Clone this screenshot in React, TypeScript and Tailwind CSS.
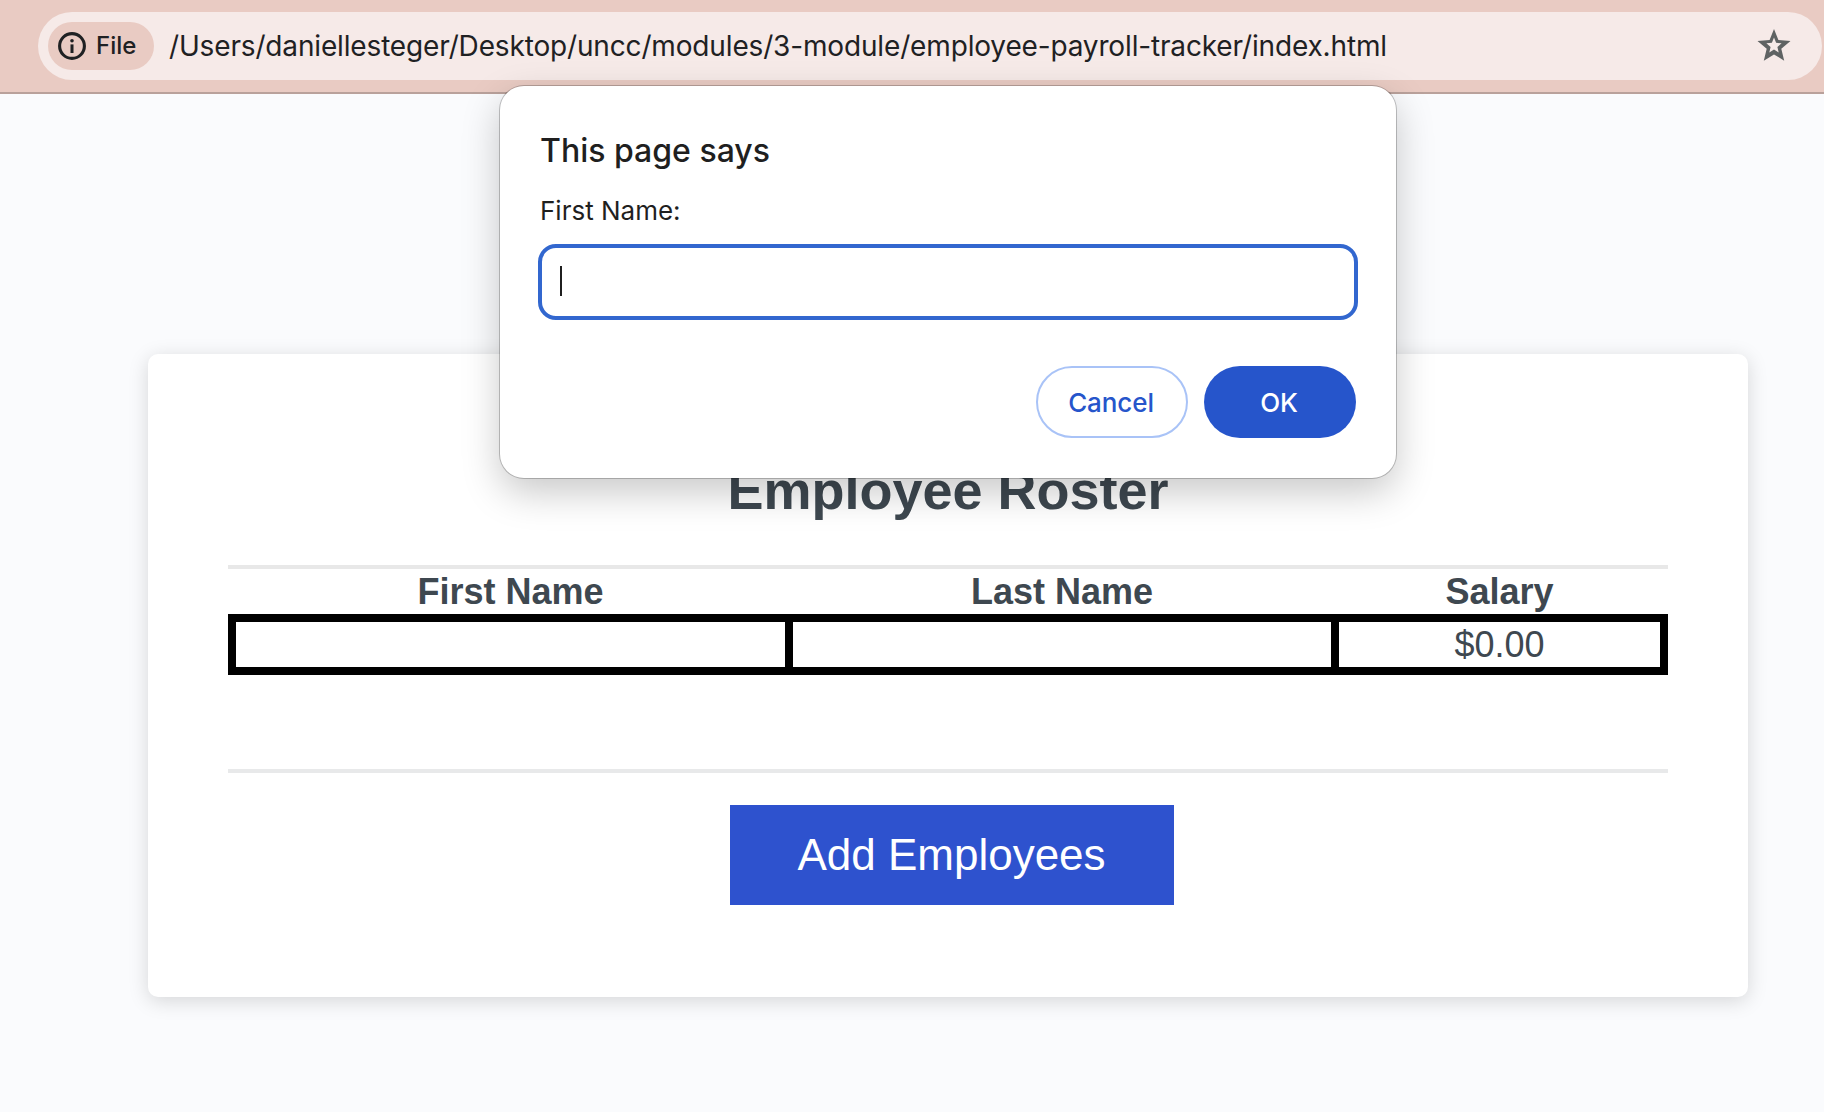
const columns = ["First Name", "Last Name", "Salary"];

function InfoIcon() {
  return (
    <svg className="h-7 w-7 shrink-0" viewBox="0 0 28 28" fill="none">
      <circle cx="14" cy="14" r="12.4" stroke="#1f2123" strokeWidth="3.1" />
      <rect x="12.5" y="12.4" width="3" height="8.6" fill="#1f2123" />
      <circle cx="14" cy="8.8" r="1.8" fill="#1f2123" />
    </svg>
  );
}

function StarIcon() {
  return (
    <svg className="h-8 w-[34px] shrink-0" viewBox="0 0 34 32" fill="#5f6363">
      <path
        fillRule="evenodd"
        d="M17 0L21.4 11L33.5 12L24.3 19.8L27.2 31.7L17 25.4L6.8 31.7L9.7 19.8L.5 12L12.6 11ZM17 8.4L14.9 13.8L9.4 14.3L13.6 17.9L12.3 23.5L17 20.6L21.7 23.5L20.4 17.9L24.6 14.3L19.1 13.8Z"
      />
    </svg>
  );
}

function AddressBar() {
  return (
    <header className="h-[94px] border-b-2 border-[#b9a19b] bg-[#e9cbc3] pt-3 pr-0.5 pl-[38px] text-[#1f2123]">
      <div className="flex h-[68px] items-center rounded-full bg-[#f6eae8] pr-[31px] pl-2.5">
        <div className="flex h-12 w-[106px] items-center gap-2.5 rounded-full bg-[#e9cbc3] pl-2.5">
          <InfoIcon />
          <span className="text-[24px] leading-none font-medium">File</span>
        </div>
        <span className="ml-[15px] flex-1 text-[28px] leading-none tracking-[-0.155px] whitespace-nowrap">
          /Users/daniellesteger/Desktop/uncc/modules/3-module/employee-payroll-tracker/index.html
        </span>
        <div className="-mt-0.5">
          <StarIcon />
        </div>
      </div>
    </header>
  );
}

function PromptDialog() {
  return (
    <div
      role="dialog"
      className="absolute top-[86px] left-[500px] h-[392px] w-[896px] rounded-[24px] bg-white pt-[45px] pr-[38px] pl-[38px] text-[#1f1f1f] shadow-[0_0_0_1px_rgba(0,0,0,0.22),0_14px_38px_rgba(0,0,0,0.22)]"
    >
      <h2 className="pl-[2px] text-[32px] leading-10 font-medium">This page says</h2>
      <p className="mt-[24px] pl-[2px] text-[26px] leading-8">First Name:</p>
      <div className="mt-[17px] flex h-[76px] w-[820px] items-center rounded-[18px] border-4 border-[#3267cf] pb-0.5 pl-[18px]">
        <span className="h-[30px] w-0.5 bg-[#1f1f1f]" />
      </div>
      <div className="mt-[46px] flex justify-end gap-4 pr-0.5 text-[26px] font-medium tracking-[-0.1px]">
        <button className="h-[72px] w-[152px] rounded-full border-2 border-[#a9c3f7] pr-0.5 text-[#2655cb]">Cancel</button>
        <button className="h-[72px] w-[152px] rounded-full bg-[#2655cb] pr-0.5 text-white">OK</button>
      </div>
    </div>
  );
}

function RosterTable() {
  return (
    <div>
      <div className="grid h-[45px] grid-cols-[549px_538px_321px] gap-2 px-2 pt-1 text-center text-[36px] leading-[38px] font-bold">
        {columns.map((name) => (
          <div key={name}>{name}</div>
        ))}
      </div>
      <div className="grid h-[61px] grid-cols-[549px_538px_321px] gap-2 bg-black px-2 py-2 text-center text-[36px] leading-[46px]">
        <div className="bg-white" />
        <div className="bg-white" />
        <div className="h-[45px] bg-white">$0.00</div>
      </div>
    </div>
  );
}

export default function App() {
  return (
    <div className="relative h-[1112px] w-[1824px] overflow-hidden bg-[#fafbfd] font-['Inter',sans-serif]">
      <AddressBar />
      <main className="mt-[260px] ml-[148px] h-[643px] w-[1600px] rounded-[10px] bg-white px-20 pt-[104px] font-['Liberation_Sans',Arial,sans-serif] text-[#3e4850] shadow-[0_4px_20px_rgba(0,0,0,0.15)]">
        <h1 className="h-[107px] text-center text-[54px] leading-[64px] font-bold">Employee Roster</h1>
        <div className="h-1 bg-[#e8e8e8]" />
        <RosterTable />
        <div className="mt-[94px] h-1 bg-[#e8e9ea]" />
        <button className="mt-8 ml-[502px] block h-[100px] w-[444px] bg-[#2e52ce] pr-px text-[44px] leading-none text-white">
          Add Employees
        </button>
      </main>
      <PromptDialog />
    </div>
  );
}
